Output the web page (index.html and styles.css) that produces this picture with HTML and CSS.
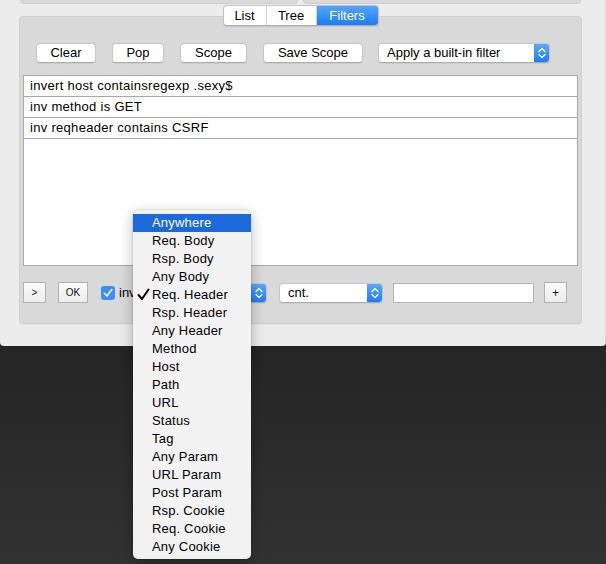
FILE: index.html
```html
<!DOCTYPE html>
<html>
<head>
<meta charset="utf-8">
<link rel="stylesheet" href="styles.css">
</head>
<body>
<div class="window">
  <div class="top-panels"><div class="tp"></div><div class="tp"></div></div>
  <div class="tabs-wrap">
    <div class="segmented">
      <div class="seg seg-list">List</div>
      <div class="seg seg-tree">Tree</div>
      <div class="seg seg-filters active">Filters</div>
    </div>
  </div>
  <div class="group">
    <div class="toolbar">
      <button class="push w-clear">Clear</button>
      <button class="push w-pop">Pop</button>
      <button class="push w-scope">Scope</button>
      <button class="push w-save">Save Scope</button>
      <div class="select w-apply"><span class="select-text">Apply a built-in filter</span><span class="arrows"><svg width="16" height="20" viewBox="0 0 16 20"><path d="M5 8.5 L8 5.5 L11 8.5 M5 11.5 L8 14.5 L11 11.5" fill="none" stroke="#fff" stroke-width="1.4" stroke-linecap="round" stroke-linejoin="round"/></svg></span></div>
    </div>
    <div class="list">
      <div class="row">invert host containsregexp .sexy$</div>
      <div class="row">inv method is GET</div>
      <div class="row">inv reqheader contains CSRF</div>
    </div>
    <div class="bottom">
      <button class="sq w-gt">&gt;</button>
      <button class="sq w-ok">OK</button>
      <label class="check"><svg width="14" height="14" viewBox="0 0 14 14"><rect x="0" y="0" width="14" height="14" rx="3" fill="#3a8ef6"/><path d="M3.3 7.3 L6 10 L10.8 3.6" fill="none" stroke="#fff" stroke-width="1.6" stroke-linecap="round" stroke-linejoin="round"/></svg><span>invert</span></label>
      <div class="select w-where"><span class="select-text"></span><span class="arrows"><svg width="16" height="20" viewBox="0 0 16 20"><path d="M5 8.5 L8 5.5 L11 8.5 M5 11.5 L8 14.5 L11 11.5" fill="none" stroke="#fff" stroke-width="1.4" stroke-linecap="round" stroke-linejoin="round"/></svg></span></div>
      <div class="select w-cnt"><span class="select-text">cnt.</span><span class="arrows"><svg width="16" height="20" viewBox="0 0 16 20"><path d="M5 8.5 L8 5.5 L11 8.5 M5 11.5 L8 14.5 L11 11.5" fill="none" stroke="#fff" stroke-width="1.4" stroke-linecap="round" stroke-linejoin="round"/></svg></span></div>
      <div class="field"></div>
      <button class="sq w-plus">+</button>
    </div>
  </div>
</div>
<div class="desk"></div>

<div class="menu">
  <div class="mi hl">Anywhere</div>
  <div class="mi">Req. Body</div>
  <div class="mi">Rsp. Body</div>
  <div class="mi">Any Body</div>
  <div class="mi"><svg class="tick" width="13" height="13" viewBox="0 0 13 13"><path d="M1.5 7 L5 11 L11.5 1.5" fill="none" stroke="#000" stroke-width="2" stroke-linecap="round" stroke-linejoin="round"/></svg>Req. Header</div>
  <div class="mi">Rsp. Header</div>
  <div class="mi">Any Header</div>
  <div class="mi">Method</div>
  <div class="mi">Host</div>
  <div class="mi">Path</div>
  <div class="mi">URL</div>
  <div class="mi">Status</div>
  <div class="mi">Tag</div>
  <div class="mi">Any Param</div>
  <div class="mi">URL Param</div>
  <div class="mi">Post Param</div>
  <div class="mi">Rsp. Cookie</div>
  <div class="mi">Req. Cookie</div>
  <div class="mi">Any Cookie</div>
</div>
</body>
</html>
```

FILE: styles.css
```css
* { box-sizing: border-box; }
html, body { margin: 0; padding: 0; }
body {
  width: 606px;
  height: 564px;
  overflow: hidden;
  background: #2b2b2b;
  font-family: "Liberation Sans", Arial, sans-serif;
  font-size: 13px;
  color: #000;
  position: relative;
}
.window {
  height: 346px;
  background: #ececec;
  border-radius: 0 0 4px 4px;
  border-right: 1px solid #d6d6d6;
  overflow: hidden;
}
.desk {
  height: 218px;
  background: linear-gradient(#252525, #323232);
}
.top-panels {
  display: flex;
  gap: 5px;
  height: 4px;
  padding: 0 24px 0 20px;
}
.tp {
  flex: 1;
  background: #d9d9d9;
  border: 1px solid #cdcdcd;
  border-top: none;
  border-radius: 0 0 4px 4px;
}
.tabs-wrap {
  display: flex;
  justify-content: center;
  padding: 0 23px 0 19px;
  margin-top: 1px;
  position: relative;
  z-index: 2;
}
.segmented {
  display: flex;
  height: 21px;
  background: #fff;
  border: 1px solid #c4c4c4;
  border-bottom-color: #adadad;
  border-radius: 4px;
  overflow: hidden;
  box-shadow: 0 0.5px 1px rgba(0,0,0,0.08);
}
.seg {
  display: flex;
  align-items: center;
  justify-content: center;
  height: 100%;
  border-right: 1px solid #d4d4d4;
  line-height: 1;
}
.seg:last-child { border-right: none; }
.seg-list { width: 43px; }
.seg-tree { width: 50px; }
.seg-filters { width: 61px; }
.seg.active {
  background: linear-gradient(#55a4fc, #1a7ef8);
  color: #fff;
}
.group {
  position: relative;
  z-index: 1;
  margin: -10px 23px 0 19px;
  height: 308px;
  background: #d9d9d9;
  border: 1px solid #cfcfcf;
  border-radius: 4px;
  box-shadow: 0 1px 0 #e4e4e4;
}
.toolbar {
  display: flex;
  align-items: center;
  padding: 26px 0 0 16px;
  height: 46px;
}
.push {
  font: inherit;
  color: #000;
  height: 20px;
  padding: 0;
  background: #fff;
  border: 1px solid #c6c6c6;
  border-bottom-color: #acacac;
  border-radius: 4px;
  box-shadow: 0 0.5px 1px rgba(0,0,0,0.06);
  margin-right: 16px;
  line-height: 18px;
}
.w-clear { width: 60px; }
.w-pop { width: 52px; }
.w-scope { width: 67px; }
.w-save { width: 100px; margin-right: 15px; }
.select {
  display: flex;
  align-items: stretch;
  height: 20px;
  background: #fff;
  border: 1px solid #c6c6c6;
  border-bottom-color: #acacac;
  border-radius: 4px;
  overflow: hidden;
  box-shadow: 0 0.5px 1px rgba(0,0,0,0.06);
}
.select-text {
  flex: 1;
  padding-left: 8px;
  line-height: 18px;
  white-space: nowrap;
  overflow: hidden;
}
.arrows {
  width: 16px;
  flex: none;
  display: flex;
  align-items: center;
  justify-content: center;
  background: linear-gradient(#5eaafd, #1a7af5);
  margin: -1px -1px -1px 0;
}
.w-apply { width: 172px; }
.list {
  margin: 12px 3px 0 3px;
  height: 191px;
  background: #fff;
  border: 1px solid #a8a8a8;
}
.row {
  height: 21px;
  line-height: 20px;
  padding-left: 6px;
  border-bottom: 1px solid #a8a8a8;
  white-space: nowrap;
  letter-spacing: 0.3px;
}
.bottom {
  display: flex;
  align-items: center;
  margin-top: 16px;
  padding-left: 3px;
  height: 21px;
}
.sq {
  font-family: "Liberation Sans", Arial, sans-serif;
  font-size: 10px;
  color: #111;
  height: 21px;
  padding: 0;
  background: linear-gradient(#fbfbfb, #ececec);
  border: 1px solid #b1b1b1;
  border-radius: 0;
}
.w-gt { width: 23px; margin-right: 12px; }
.w-ok { width: 30px; margin-right: 13px; }
.w-plus { width: 23px; font-size: 12px; }
.check {
  display: flex;
  align-items: center;
  gap: 4px;
  width: 59px;
}
.check svg { flex: none; }
.w-where { width: 107px; margin-right: 12px; }
.w-cnt { width: 104px; margin-right: 10px; }
.field {
  width: 141px;
  height: 20px;
  background: #fff;
  border: 1px solid #b4b4b4;
  margin-right: 10px;
}
.menu {
  position: absolute;
  left: 133px;
  top: 210px;
  width: 118px;
  height: 349px;
  padding-top: 4px;
  background: #f2f2f2;
  border-radius: 5px;
  box-shadow: 0 0 0 0.5px rgba(0,0,0,0.12), 0 4px 14px rgba(0,0,0,0.28);
  z-index: 10;
}
.mi {
  position: relative;
  height: 18px;
  line-height: 18px;
  padding-left: 19px;
  white-space: nowrap;
  letter-spacing: 0.2px;
}
.mi.hl {
  background: #1c6ad9;
  color: #fff;
}
.tick {
  position: absolute;
  left: 4px;
  top: 2px;
}
```
